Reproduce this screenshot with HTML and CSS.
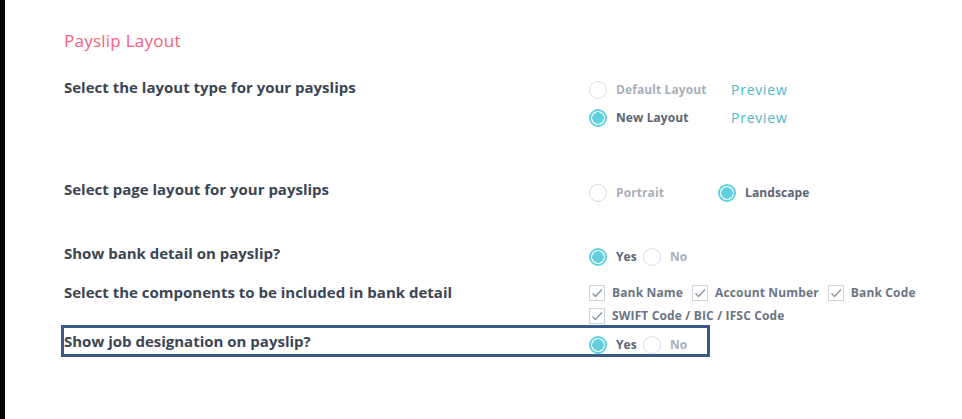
FILE: index.html
```html
<!DOCTYPE html>
<html>
<head>
<meta charset="utf-8">
<link rel="stylesheet" href="styles.css">
</head>
<body>
<div class="page">
  <h2 class="title">Payslip Layout</h2>

  <div class="row row-layout">
    <div class="label">Select the layout type for your payslips</div>
    <div class="opts stack">
      <div class="opt-line">
        <span class="radio"></span><span class="opt muted w-default">Default Layout</span><a class="preview">Preview</a>
      </div>
      <div class="opt-line">
        <span class="radio on"></span><span class="opt w-default">New Layout</span><a class="preview">Preview</a>
      </div>
    </div>
  </div>

  <div class="row row-page">
    <div class="label">Select page layout for your payslips</div>
    <div class="opts">
      <span class="radio"></span><span class="opt muted w-portrait">Portrait</span>
      <span class="radio on"></span><span class="opt">Landscape</span>
    </div>
  </div>

  <div class="row row-bank">
    <div class="label">Show bank detail on payslip?</div>
    <div class="opts">
      <span class="radio on"></span><span class="opt yes">Yes</span>
      <span class="radio"></span><span class="opt muted">No</span>
    </div>
  </div>

  <div class="row row-comp">
    <div class="label">Select the components to be included in bank detail</div>
    <div class="opts checks">
      <span class="check-item"><span class="check"><svg viewBox="0 0 16 16" width="16" height="16"><path d="M3.5 8.5 L6.5 11.5 L13 4.5" fill="none" stroke="#8a929c" stroke-width="1.3"/></svg></span><span class="clabel">Bank Name</span></span>
      <span class="check-item"><span class="check"><svg viewBox="0 0 16 16" width="16" height="16"><path d="M3.5 8.5 L6.5 11.5 L13 4.5" fill="none" stroke="#8a929c" stroke-width="1.3"/></svg></span><span class="clabel">Account Number</span></span>
      <span class="check-item"><span class="check"><svg viewBox="0 0 16 16" width="16" height="16"><path d="M3.5 8.5 L6.5 11.5 L13 4.5" fill="none" stroke="#8a929c" stroke-width="1.3"/></svg></span><span class="clabel">Bank Code</span></span>
      <span class="check-item"><span class="check"><svg viewBox="0 0 16 16" width="16" height="16"><path d="M3.5 8.5 L6.5 11.5 L13 4.5" fill="none" stroke="#8a929c" stroke-width="1.3"/></svg></span><span class="clabel">SWIFT Code / BIC / IFSC Code</span></span>
    </div>
  </div>

  <div class="row row-job highlight">
    <div class="label">Show job designation on payslip?</div>
    <div class="opts">
      <span class="radio on"></span><span class="opt yes">Yes</span>
      <span class="radio"></span><span class="opt muted">No</span>
    </div>
  </div>
</div>
</body>
</html>
```

FILE: styles.css
```css
html, body {
  margin: 0;
  padding: 0;
  background: #ffffff;
}
body {
  width: 962px;
  height: 419px;
  border-left: 5px solid #000000;
  box-sizing: border-box;
  overflow: hidden;
}
.page {
  padding: 30px 0 0 59px;
  font-family: "Open Sans", "Liberation Sans", sans-serif;
}
.title {
  margin: 0;
  font-family: "Open Sans", sans-serif;
  font-weight: 400;
  font-size: 17px;
  letter-spacing: 0.25px;
  line-height: 22px;
  color: #f4627c;
}
.row {
  display: grid;
  grid-template-columns: 525px 1fr;
  align-items: start;
}
.label {
  font-weight: 700;
  font-size: 15px;
  letter-spacing: 0;
  line-height: 20px;
  color: #3b4554;
}
.opts {
  display: flex;
  align-items: center;
  flex-wrap: wrap;
  font-family: "Open Sans", "Liberation Sans", sans-serif;
  font-size: 12px;
  line-height: 18px;
  font-weight: 700;
  letter-spacing: 0.1px;
  color: #5b6574;
}
.stack {
  flex-direction: column;
  align-items: flex-start;
  gap: 10px;
}
.opt-line {
  display: flex;
  align-items: center;
  height: 18px;
}
.radio {
  box-sizing: border-box;
  width: 18px;
  height: 18px;
  border-radius: 50%;
  border: 1.5px solid #d5dde3;
  margin-right: 9px;
  flex: none;
  background: #fff;
}
.radio.on {
  border: 2px solid #5fd0de;
  background: radial-gradient(circle, #5fd0de 0 5.5px, #ffffff 6px);
}
.opt { color: #5b6574; }
.opt.muted { color: #a7afba; }
.w-default { width: 115px; }
.w-portrait { width: 102px; }
.yes { width: 27px; }
.preview {
  font-family: "Open Sans", sans-serif;
  font-weight: 400;
  font-size: 14px;
  letter-spacing: 0.75px;
  color: #4db8c9;
}
.row-layout { margin-top: 25px; }
.row-layout .opts { padding-top: 4px; }
.row-page { margin-top: 52px; }
.row-page .opts { padding-top: 5px; }
.row-bank { margin-top: 41px; }
.row-bank .opts { padding-top: 5px; }
.row-comp { margin-top: 16px; }
.row-comp .opts { padding-top: 2px; }
.checks { width: 360px; row-gap: 5px; }
.check-item {
  display: inline-flex;
  align-items: center;
  height: 18px;
  margin-right: 9px;
}
.check {
  box-sizing: border-box;
  width: 16px;
  height: 16px;
  border: 1px solid #ccd3d9;
  margin-right: 7px;
  display: inline-flex;
}
.check svg { display: block; margin: -1px; }
.clabel { color: #6b7584; letter-spacing: 0.15px; }
.highlight {
  margin-left: -3px;
  padding: 3px 0 0 0;
  width: 649px;
  height: 32px;
  border: 3px solid #3a5a86;
  box-sizing: border-box;
}
.highlight .opts { padding-top: 5px; }
```
